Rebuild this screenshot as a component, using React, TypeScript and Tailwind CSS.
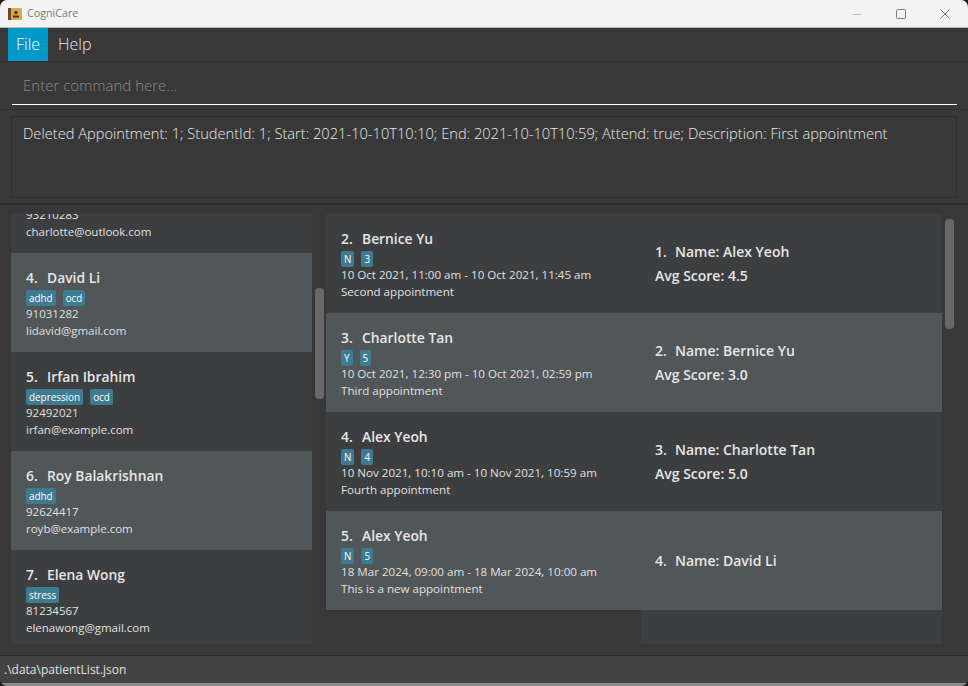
const sans = { fontFamily: '"Open Sans", "Noto Sans", sans-serif' };

type Patient = {
  id: number;
  name: string;
  tags: string[];
  phone: string;
  email: string;
};

type Appointment = {
  id: number;
  name: string;
  attended: string;
  score: string;
  time: string;
  description: string;
};

const patients: Patient[] = [
  { id: 3, name: "Charlotte Tan", tags: [], phone: "93210283", email: "charlotte@outlook.com" },
  { id: 4, name: "David Li", tags: ["adhd", "ocd"], phone: "91031282", email: "lidavid@gmail.com" },
  { id: 5, name: "Irfan Ibrahim", tags: ["depression", "ocd"], phone: "92492021", email: "irfan@example.com" },
  { id: 6, name: "Roy Balakrishnan", tags: ["adhd"], phone: "92624417", email: "royb@example.com" },
  { id: 7, name: "Elena Wong", tags: ["stress"], phone: "81234567", email: "elenawong@gmail.com" },
];

const appointments: Appointment[] = [
  { id: 2, name: "Bernice Yu", attended: "N", score: "3", time: "10 Oct 2021, 11:00 am - 10 Oct 2021, 11:45 am", description: "Second appointment" },
  { id: 3, name: "Charlotte Tan", attended: "Y", score: "5", time: "10 Oct 2021, 12:30 pm - 10 Oct 2021, 02:59 pm", description: "Third appointment" },
  { id: 4, name: "Alex Yeoh", attended: "N", score: "4", time: "10 Nov 2021, 10:10 am - 10 Nov 2021, 10:59 am", description: "Fourth appointment" },
  { id: 5, name: "Alex Yeoh", attended: "N", score: "5", time: "18 Mar 2024, 09:00 am - 18 Mar 2024, 10:00 am", description: "This is a new appointment" },
];

const scores = [
  { id: 1, name: "Alex Yeoh", avg: "4.5" },
  { id: 2, name: "Bernice Yu", avg: "3.0" },
  { id: 3, name: "Charlotte Tan", avg: "5.0" },
  { id: 4, name: "David Li", avg: "" },
];

function Tag({ label }: { label: string }) {
  return (
    <span className="rounded-[2px] bg-[#3e7b91] px-[3px] text-[9.9px] leading-[16px] text-white">
      {label}
    </span>
  );
}

function Heading({ id, name }: { id: number; name: string }) {
  return (
    <div className="flex text-[13.85px] font-semibold leading-[20px] text-[#e6e6e6]">
      <span className="w-[21px]">{id}.</span>
      <span>{name}</span>
    </div>
  );
}

function PatientCard({ p }: { p: Patient }) {
  return (
    <div className={`h-[99px] shrink-0 pl-[15px] pt-[15px] ${p.id % 2 === 0 ? "bg-[#515658]" : "bg-[#3c3e3f]"}`}>
      <Heading id={p.id} name={p.name} />
      <div className="mt-[2px] flex h-[16px] gap-[7px]">
        {p.tags.map((t) => (
          <Tag key={t} label={t} />
        ))}
      </div>
      <div className="text-[11.5px] leading-[16px] text-[#e0e0e0]">{p.phone}</div>
      <div className="text-[11.5px] leading-[17px] text-[#e0e0e0]">{p.email}</div>
    </div>
  );
}

function AppointmentCard({ a }: { a: Appointment }) {
  return (
    <div className={`h-[99px] shrink-0 pl-[15px] pt-[15px] ${a.id % 2 === 1 ? "bg-[#515658]" : "bg-[#3c3e3f]"}`}>
      <Heading id={a.id} name={a.name} />
      <div className="mt-[2px] flex h-[16px] gap-[7px]">
        <Tag label={a.attended} />
        <Tag label={a.score} />
      </div>
      <div className="text-[11.6px] leading-[16px] text-[#e0e0e0]">{a.time}</div>
      <div className="text-[11.6px] leading-[17px] text-[#e0e0e0]">{a.description}</div>
    </div>
  );
}

function ScoreCard({ s }: { s: (typeof scores)[number] }) {
  return (
    <div className={`flex h-[99px] shrink-0 flex-col justify-center gap-[4px] pl-[14px] text-[14px] font-semibold leading-[20px] text-[#e6e6e6] ${s.id % 2 === 0 ? "bg-[#515658]" : "bg-[#3c3e3f]"}`}>
      <div className="flex">
        <span className="w-[20px]">{s.id}.</span>
        <span>Name: {s.name}</span>
      </div>
      {s.avg && <div>Avg Score: {s.avg}</div>}
    </div>
  );
}

export default function App() {
  return (
    <div className="flex h-[686px] w-[968px] flex-col overflow-hidden bg-[#1c1c1c]" style={sans}>
      <div className="flex h-[28px] shrink-0 items-center rounded-t-[7px] border-b border-[#b5b5b5] bg-[#f3f3f3] pl-[8px]">
        <svg width="14" height="14" viewBox="0 0 14 14">
          <rect x="0" y="1" width="14" height="12" rx="1" fill="#d8a955" />
          <rect x="0" y="1" width="3" height="12" fill="#6b4a2a" />
          <circle cx="8" cy="5.5" r="1.7" fill="#4a3418" />
          <rect x="5" y="8.5" width="6" height="2" fill="#4a3418" />
        </svg>
        <span className="ml-[5px] text-[10.7px] text-[#7a7a7a]">CogniCare</span>
        <div className="ml-auto flex items-center gap-[34px] pr-[18px]">
          <svg width="10" height="10" viewBox="0 0 10 10">
            <path d="M0.5 5.5H9.5" stroke="#c0c0c0" strokeWidth="1" />
          </svg>
          <svg width="10" height="10" viewBox="0 0 10 10">
            <rect x="0.5" y="0.5" width="9" height="9" rx="1" fill="none" stroke="#7a7a7a" />
          </svg>
          <svg width="10" height="10" viewBox="0 0 10 10">
            <path d="M0.5 0.5L9.5 9.5M9.5 0.5L0.5 9.5" stroke="#7a7a7a" strokeWidth="1" />
          </svg>
        </div>
      </div>

      <div className="flex h-[34px] shrink-0 border-b border-[#2f2f2f] bg-[#383838] pl-[8px] text-[16px] leading-[22px] font-light text-[#e8e8e8]">
        <div className="flex w-[40px] items-center justify-center bg-[#0097c9] pb-[2px] text-white">File</div>
        <div className="flex items-center pb-[2px] pl-[10px]">Help</div>
      </div>

      <div className="h-[48px] shrink-0 border-b border-[#2f2f2f] bg-[#383838] px-[12px]">
        <div className="mr-[-1px] flex h-[43px] items-center border-b border-white pl-[11px] pt-[4px] text-[15px] font-light text-[#8a8a8a]">
          Enter command here...
        </div>
      </div>

      <div className="h-[95px] shrink-0 border-b-2 border-[#2c2c2c] bg-[#383838] px-[11px] pt-[6px]">
        <div className="h-[82px] border border-[#2d2d2d] pl-[11px] pt-[5px] text-[14.65px] font-light leading-[22px] text-[#e8e8e8]">
          Deleted Appointment: 1; StudentId: 1; Start: 2021-10-10T10:10; End: 2021-10-10T10:59; Attend: true; Description: First appointment
        </div>
      </div>

      <div className="flex h-[450px] shrink-0 bg-[#383838] pl-[11px] pt-[9px]">
        <div className="h-[430px] w-[301px] shrink-0 overflow-hidden bg-[#3c3e3f]">
          <div className="-mt-[60px] flex flex-col">
            {patients.map((p) => (
              <PatientCard key={p.id} p={p} />
            ))}
          </div>
        </div>
        <div className="w-[14px] shrink-0">
          <div className="ml-[3px] mt-[74px] h-[111px] w-[9px] rounded-[4px] bg-[#686868]" />
        </div>
        <div className="flex h-[396px] w-[315px] shrink-0 flex-col">
          {appointments.map((a) => (
            <AppointmentCard key={a.id} a={a} />
          ))}
        </div>
        <div className="flex h-[430px] w-[301px] shrink-0 flex-col bg-[#3c3e3f]">
          {scores.map((s) => (
            <ScoreCard key={s.id} s={s} />
          ))}
        </div>
        <div className="w-[14px] shrink-0">
          <div className="ml-[3px] mt-[5px] h-[110px] w-[9px] rounded-[4px] bg-[#686868]" />
        </div>
      </div>

      <div className="flex-1 overflow-hidden rounded-b-[7px]">
        <div className="flex h-[28px] items-center border-t border-[#2a2a2a] bg-[#434343] pl-[4px] text-[12px] text-[#e0e0e0]">
          .\data\patientList.json
        </div>
        <div className="h-[3px] bg-[#8c8c8c]" />
      </div>
    </div>
  );
}
